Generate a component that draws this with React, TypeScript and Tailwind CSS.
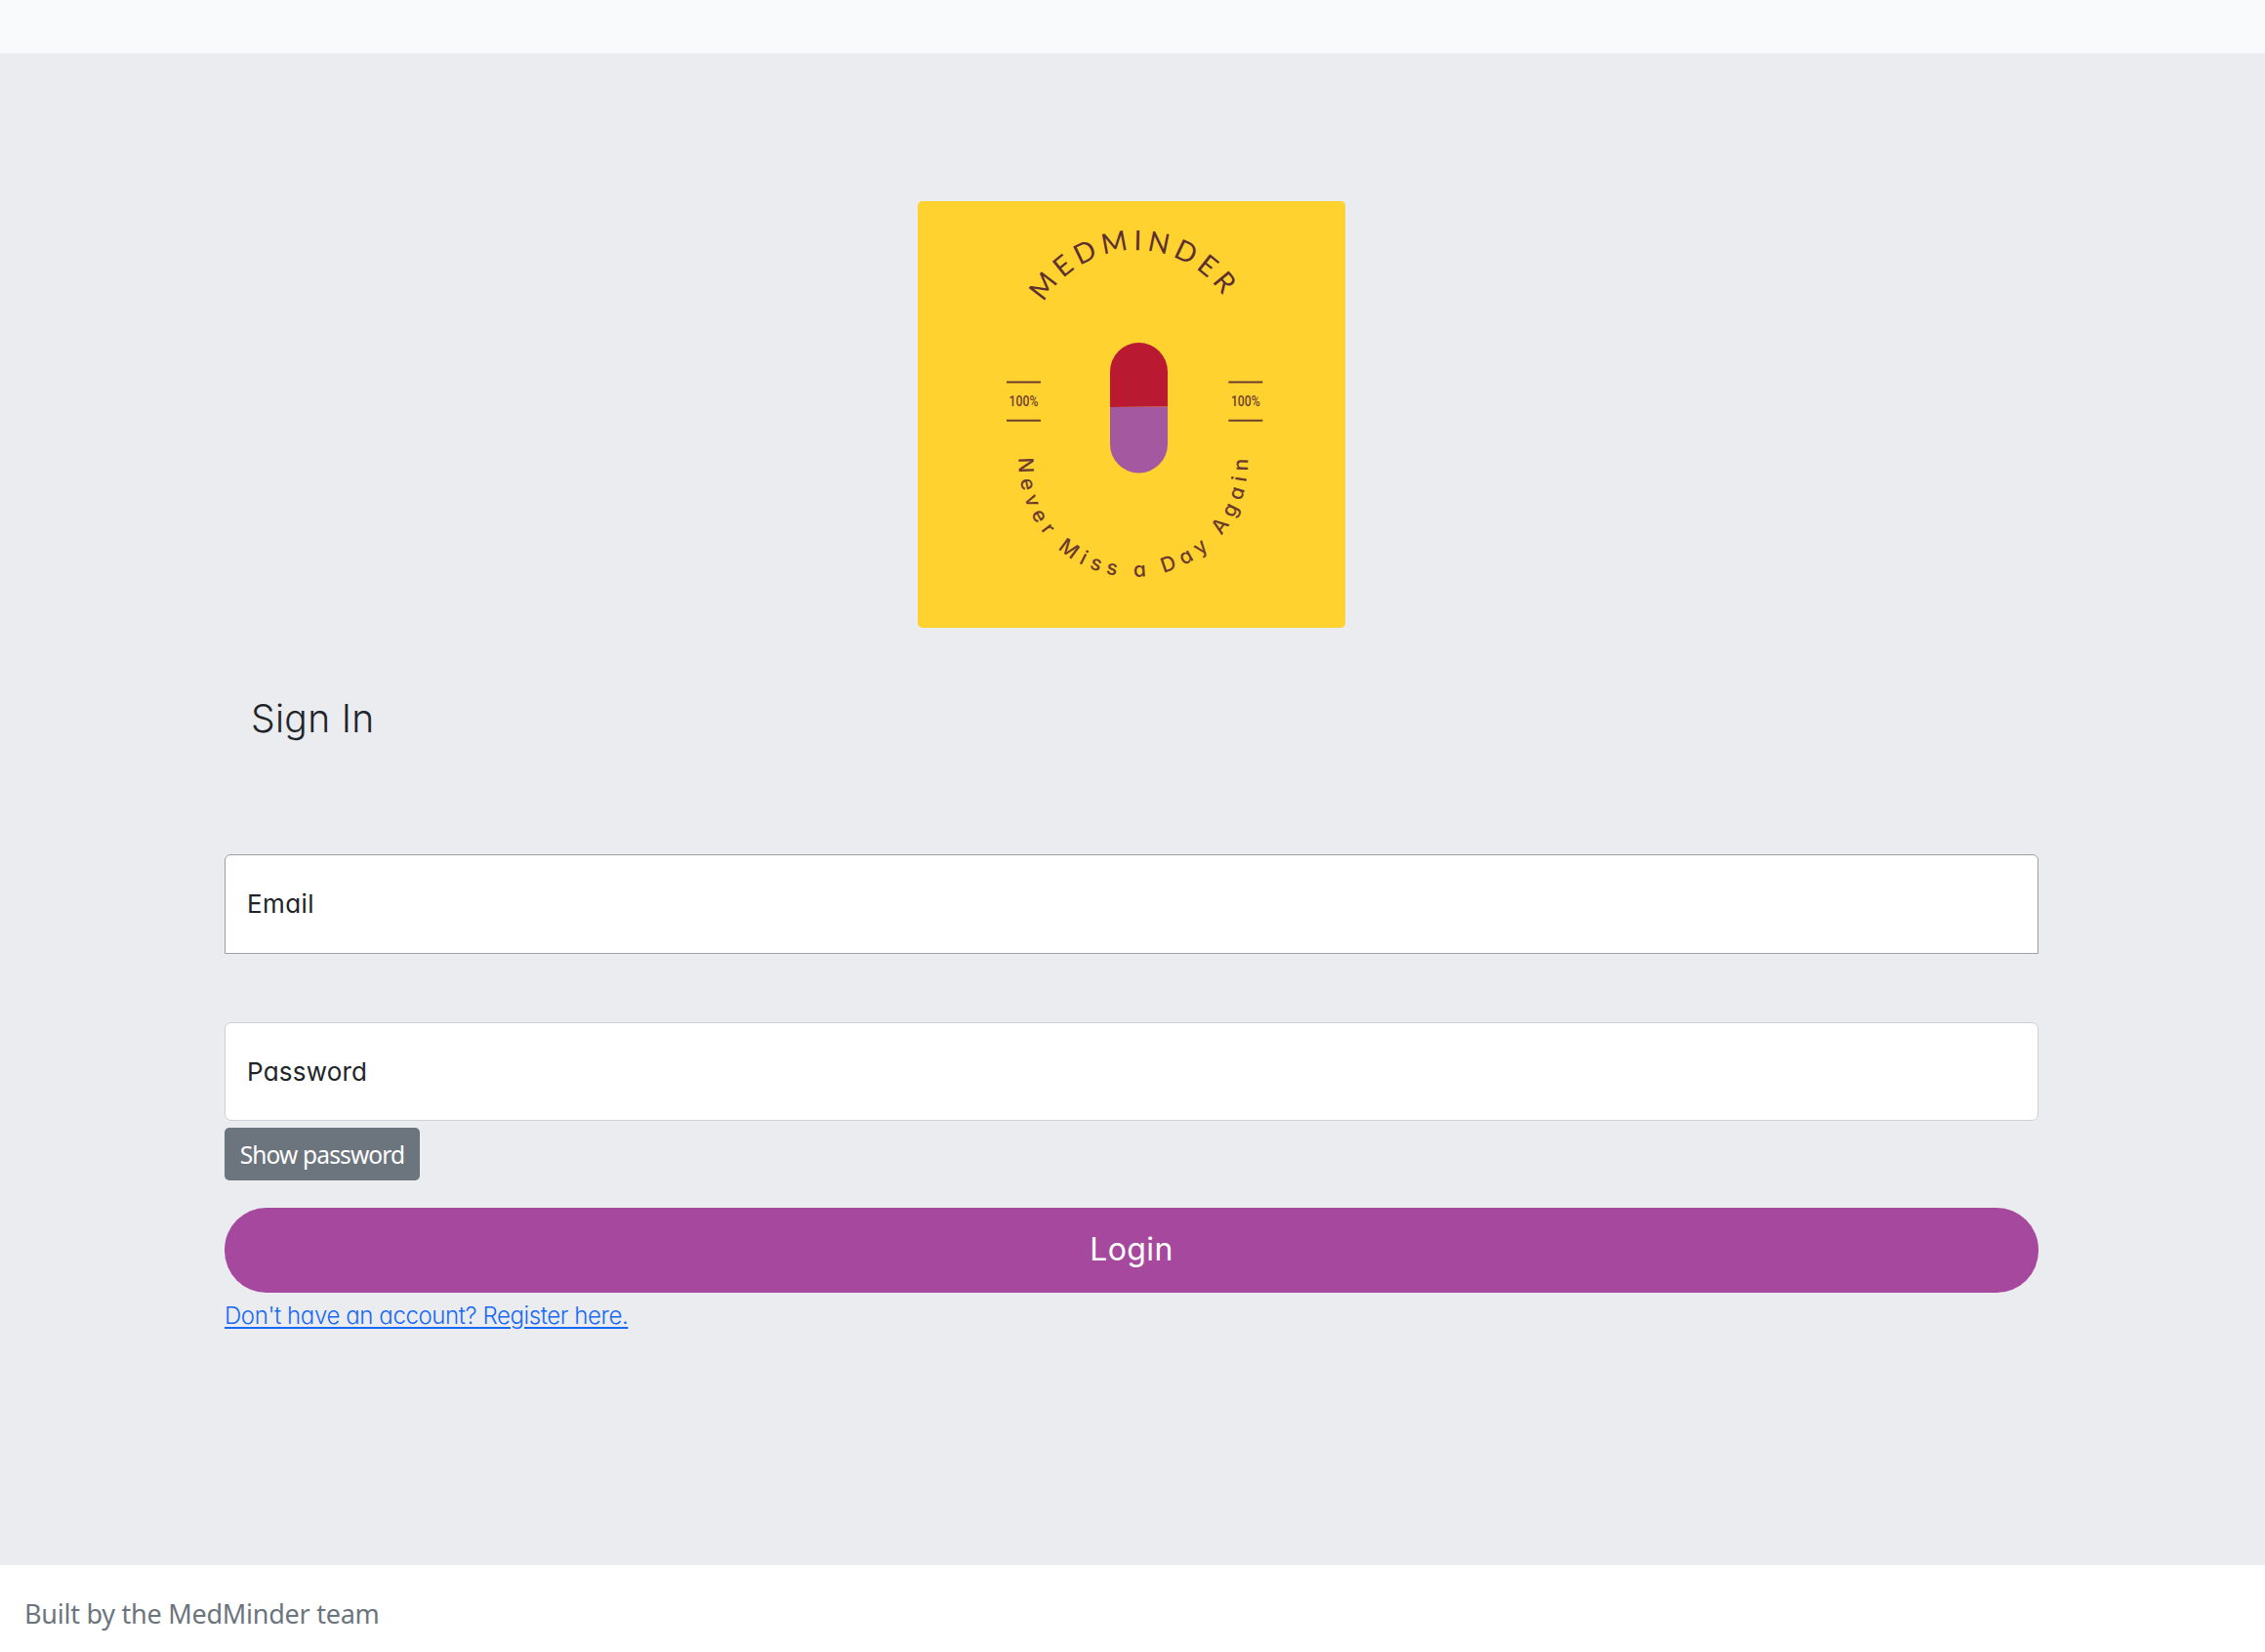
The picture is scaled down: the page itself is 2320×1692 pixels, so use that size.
const questrial = "font-['Inter','Liberation_Sans',sans-serif] [font-feature-settings:'cv11']";
const segoe = "font-['Noto_Sans','Open_Sans',sans-serif]";

function Badge({ x }: { x: number }) {
  return (
    <g fill="#6d3f2e">
      <rect x={x} y={184.4} width={35} height={2} />
      <rect x={x} y={223.7} width={35} height={2} />
      <text
        x={x + 2.6}
        y={210}
        className="font-['Roboto',sans-serif] text-[15px] font-medium"
        textLength={29.8}
        lengthAdjust="spacingAndGlyphs"
      >
        100%
      </text>
    </g>
  );
}

function Logo() {
  return (
    <svg
      viewBox="0 0 438 437"
      className="mr-[1px] block h-[437px] w-[438px] rounded-[5px] bg-[#ffd230]"
      role="img"
      aria-label="MedMinder"
    >
      <defs>
        <path id="upper" d="M129 103.9A109.3 109.3 0 0 1 325 120" />
        <path id="lower" d="M103.6 262.8A117.3 117.3 0 1 0 338 262.8" />
      </defs>
      <text className="font-['Lato',sans-serif] text-[28.5px]" fill="#5c2f31">
        <textPath href="#upper" textLength={217.5} lengthAdjust="spacing">MEDMINDER</textPath>
      </text>
      <text
        className="font-['Inter',sans-serif] text-[21px] font-medium [font-feature-settings:'cv11'] [word-spacing:-1px]"
        fill="#6b3a2e"
      >
        <textPath href="#lower" textLength={377} lengthAdjust="spacing">Never Miss a Day Again</textPath>
      </text>
      <Badge x={91} />
      <Badge x={318.3} />
      <path d="M197 211V174.5a29.5 29.5 0 0 1 59 0V210.5Z" fill="#b91a32" />
      <path d="M197 211L256 210.5V249a29.5 29.5 0 0 1-59 0Z" fill="#a3589f" />
    </svg>
  );
}

export default function App() {
  return (
    <div className="flex h-[1692px] w-[2320px] flex-col bg-white">
      <header className="h-[55px] shrink-0 border-b border-[#f1f3f6] bg-[#f8fafc]" />
      <main className={`flex h-[1548px] shrink-0 flex-col bg-[#eaecef] px-[230px] pt-[151px] text-[#212529] ${questrial}`}>
        <div className="flex w-[1858px] justify-center">
          <Logo />
        </div>
        <h1 className="mt-[70px] ml-[27px] h-[46px] text-[39px] leading-[46px] font-[350] tracking-[0.3px] [font-optical-sizing:none]">
          Sign In
        </h1>
        <form className="mt-[116px] flex w-[1858px] flex-col items-start">
          <label className="flex h-[102px] w-full items-center rounded-t-[6px] border border-[#a09ea3] bg-white px-[22px] pb-[2px] text-[26px] tracking-[0.4px]">
            Email
          </label>
          <label className="mt-[70px] flex h-[101px] w-full items-center rounded-[7px] border border-[#ced0d8] bg-white px-[22px] pb-px text-[26px] tracking-[0.2px]">
            Password
          </label>
          <button
            type="button"
            className={`mt-[7px] h-[54px] w-[200px] rounded-[5px] bg-[#6c757d] pt-[2px] text-[24.5px] tracking-[-0.85px] text-white ${segoe}`}
          >
            Show password
          </button>
          <button
            type="button"
            className="mt-[28px] h-[87px] w-full rounded-[43px] bg-[#a6499e] pb-px text-[32px] tracking-[0.4px] text-white [font-optical-sizing:none]"
          >
            Login
          </button>
          <a
            href="#"
            className="mt-[9px] text-[24px] leading-[30px] font-[360] tracking-[-0.4px] text-[#1768f5] underline decoration-2 underline-offset-[3px]"
          >
            Don't have an account? Register here.
          </a>
        </form>
      </main>
      <footer className={`flex flex-1 items-center pl-[25px] text-[27px] tracking-[-0.25px] text-[#6c757d] ${segoe}`}>
        <p className="mt-[11px]">Built by the MedMinder team</p>
      </footer>
    </div>
  );
}
